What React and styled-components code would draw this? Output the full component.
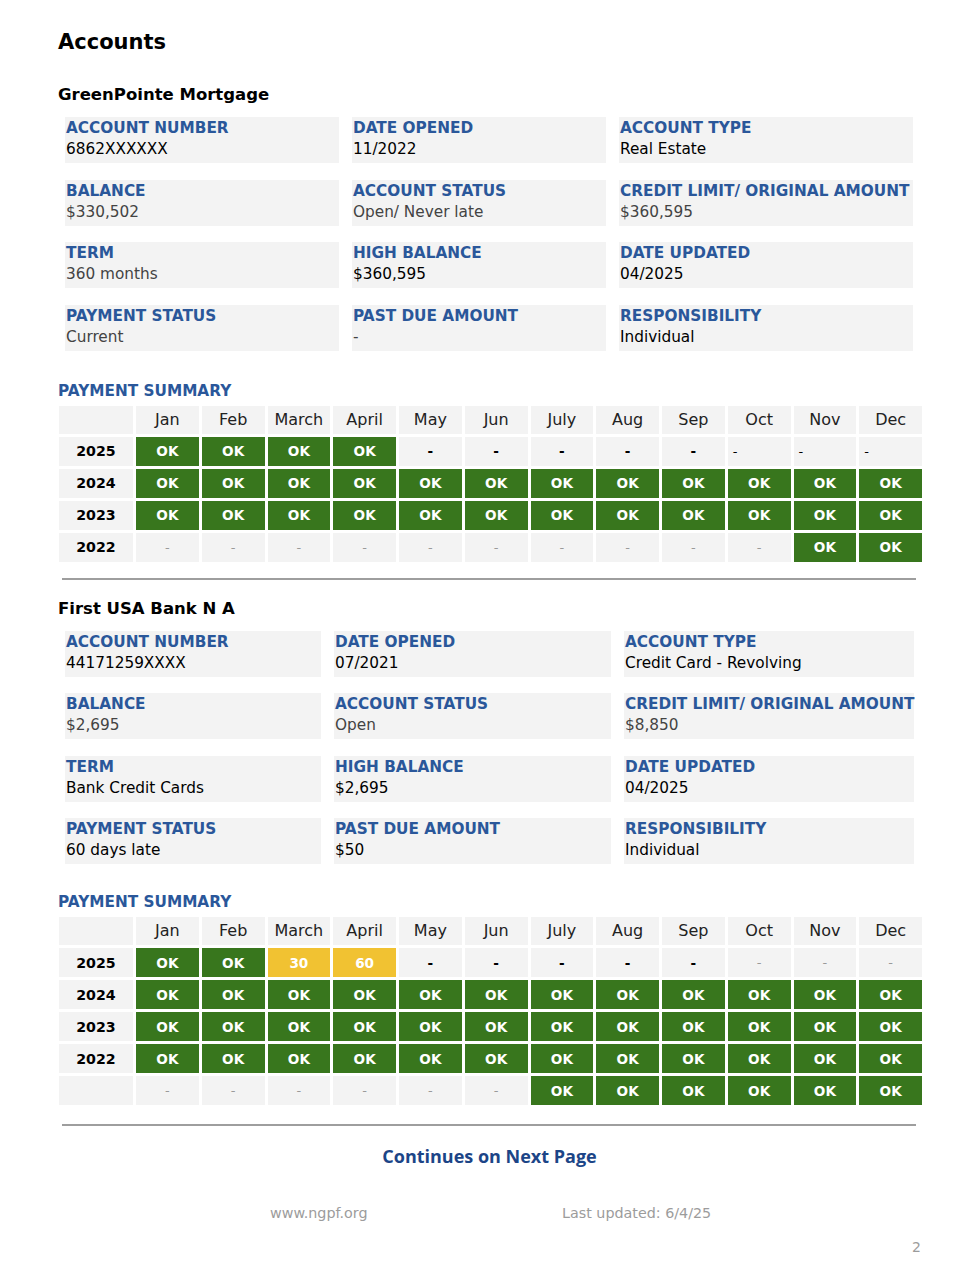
import React from "react";
import styled, { createGlobalStyle } from "styled-components";

const Global = createGlobalStyle`
  html, body { margin: 0; padding: 0; background: #fff; }
  body { font-family: "DejaVu Sans", "Liberation Sans", sans-serif; color: #000; }
`;

const Page = styled.div`
  width: 979px;
  min-height: 1266px;
  box-sizing: border-box;
  padding: 0 0 0 58px;
  display: flex;
  flex-direction: column;
`;

const Title = styled.h1`
  margin: 29px 0 0;
  font-size: 21px;
  line-height: 26px;
  font-weight: 700;
`;

const AccountName = styled.h2`
  margin: ${(p) => p.$top}px 0 0;
  font-size: 16.5px;
  line-height: 22px;
  font-weight: 700;
`;

const InfoGrid = styled.div`
  margin: 11px 0 0 7px;
  display: grid;
  grid-template-columns: ${(p) => p.$cols};
  column-gap: 13px;
  row-gap: 16.5px;
  width: 849px;
`;

const InfoCell = styled.div`
  background: #f3f3f3;
  height: 46px;
  box-sizing: border-box;
  padding: 1px 1px 0;
  display: flex;
  flex-direction: column;
`;

const Label = styled.div`
  color: #2a579a;
  font-weight: 700;
  font-size: 15.3px;
  line-height: 20px;
  white-space: nowrap;
`;

const Value = styled.div`
  color: ${(p) => (p.$muted ? "#434343" : "#000")};
  font-size: 15.3px;
  line-height: 22px;
  white-space: nowrap;
`;

const SectionLabel = styled.div`
  margin-top: ${(p) => p.$top}px;
  color: #2a579a;
  font-weight: 700;
  font-size: 15.3px;
  line-height: 20px;
`;

const Table = styled.table`
  margin: 2px 0 0 -2px;
  width: 869px;
  table-layout: fixed;
  border-collapse: separate;
  border-spacing: 3px;
`;

const HeadCell = styled.th`
  background: #f3f3f3;
  height: 28px;
  padding: 0;
  font-weight: 400;
  font-size: 16px;
  line-height: 18px;
  color: #222;
  text-align: center;
  vertical-align: middle;
  width: ${(p) => (p.$year ? "74px" : "auto")};
`;

const YearCell = styled.td`
  background: #f3f3f3;
  height: 29px;
  padding: 0;
  font-weight: 700;
  font-size: 14.2px;
  text-align: center;
  color: #000;
`;

const cellBg = { ok: "#38761d", late: "#f1c232" };

const MonthCell = styled.td`
  height: 29px;
  padding: ${(p) => (p.$kind === "dashLeft" ? "0 0 0 5px" : "0")};
  background: ${(p) => cellBg[p.$kind] || "#f3f3f3"};
  color: ${(p) =>
    p.$kind === "ok" || p.$kind === "late"
      ? "#fff"
      : p.$kind === "empty"
      ? "#9a9a9a"
      : "#000"};
  font-weight: ${(p) =>
    p.$kind === "ok" || p.$kind === "late" || p.$kind === "dash" ? 700 : 400};
  font-size: ${(p) => (p.$kind === "empty" || p.$kind === "dashLeft" ? "13px" : "13.6px")};
  text-align: ${(p) => (p.$kind === "dashLeft" ? "left" : "center")};
`;

const Rule = styled.hr`
  margin: ${(p) => p.$top}px 0 0 4px;
  width: 854px;
  height: 2px;
  border: 0;
  background: #9e9e9e;
`;

const Continue = styled.div`
  margin-top: 18px;
  width: 863px;
  text-align: center;
  font-family: "Open Sans", "Noto Sans", sans-serif;
  font-weight: 700;
  font-size: 18px;
  line-height: 24px;
  color: #1c4587;
`;

const Footer = styled.div`
  margin: 36px 0 0 212px;
  display: flex;
  font-size: 14.3px;
  line-height: 18px;
  color: #9c9c9c;
`;

const FooterItem = styled.span`
  width: ${(p) => p.$w || "auto"};
`;

const PageNum = styled.div`
  margin-top: 16px;
  padding-right: 58px;
  text-align: right;
  font-size: 14px;
  line-height: 18px;
  color: #9c9c9c;
`;

const MONTHS = ["Jan", "Feb", "March", "April", "May", "Jun", "July", "Aug", "Sep", "Oct", "Nov", "Dec"];

const rep = (v, n) => Array(n).fill(v);

const accounts = [
  {
    name: "GreenPointe Mortgage",
    top: 29,
    cols: "274px 254px 294px",
    summaryTop: 30,
    fields: [
      ["ACCOUNT NUMBER", "6862XXXXXX"],
      ["DATE OPENED", "11/2022"],
      ["ACCOUNT TYPE", "Real Estate"],
      ["BALANCE", "$330,502", true],
      ["ACCOUNT STATUS", "Open/ Never late", true],
      ["CREDIT LIMIT/ ORIGINAL AMOUNT", "$360,595", true],
      ["TERM", "360 months", true],
      ["HIGH BALANCE", "$360,595"],
      ["DATE UPDATED", "04/2025"],
      ["PAYMENT STATUS", "Current", true],
      ["PAST DUE AMOUNT", "-", true],
      ["RESPONSIBILITY", "Individual"],
    ],
    rows: [
      ["2025", [...rep(["ok", "OK"], 4), ...rep(["dash", "-"], 5), ...rep(["dashLeft", "-"], 3)]],
      ["2024", rep(["ok", "OK"], 12)],
      ["2023", rep(["ok", "OK"], 12)],
      ["2022", [...rep(["empty", "-"], 10), ...rep(["ok", "OK"], 2)]],
    ],
    ruleTop: 13,
  },
  {
    name: "First USA Bank N A",
    top: 18,
    cols: "256px 277px 290px",
    summaryTop: 28,
    fields: [
      ["ACCOUNT NUMBER", "44171259XXXX"],
      ["DATE OPENED", "07/2021"],
      ["ACCOUNT TYPE", "Credit Card - Revolving"],
      ["BALANCE", "$2,695", true],
      ["ACCOUNT STATUS", "Open", true],
      ["CREDIT LIMIT/ ORIGINAL AMOUNT", "$8,850", true],
      ["TERM", "Bank Credit Cards"],
      ["HIGH BALANCE", "$2,695"],
      ["DATE UPDATED", "04/2025"],
      ["PAYMENT STATUS", "60 days late"],
      ["PAST DUE AMOUNT", "$50"],
      ["RESPONSIBILITY", "Individual"],
    ],
    rows: [
      ["2025", [["ok", "OK"], ["ok", "OK"], ["late", "30"], ["late", "60"], ...rep(["dash", "-"], 5), ...rep(["empty", "-"], 3)]],
      ["2024", rep(["ok", "OK"], 12)],
      ["2023", rep(["ok", "OK"], 12)],
      ["2022", rep(["ok", "OK"], 12)],
      ["", [...rep(["empty", "-"], 6), ...rep(["ok", "OK"], 6)]],
    ],
    ruleTop: 16,
  },
];

function Account({ a }) {
  return (
    <>
      <AccountName $top={a.top}>{a.name}</AccountName>
      <InfoGrid $cols={a.cols}>
        {a.fields.map(([label, value, muted]) => (
          <InfoCell key={label}>
            <Label>{label}</Label>
            <Value $muted={muted}>{value}</Value>
          </InfoCell>
        ))}
      </InfoGrid>
      <SectionLabel $top={a.summaryTop}>PAYMENT SUMMARY</SectionLabel>
      <Table>
        <thead>
          <tr>
            <HeadCell $year />
            {MONTHS.map((m) => (
              <HeadCell key={m}>{m}</HeadCell>
            ))}
          </tr>
        </thead>
        <tbody>
          {a.rows.map(([year, cells], i) => (
            <tr key={i}>
              <YearCell>{year}</YearCell>
              {cells.map(([kind, text], j) => (
                <MonthCell key={j} $kind={kind}>
                  {text}
                </MonthCell>
              ))}
            </tr>
          ))}
        </tbody>
      </Table>
      <Rule $top={a.ruleTop} />
    </>
  );
}

export default function App() {
  return (
    <>
      <Global />
      <Page>
        <Title>Accounts</Title>
        {accounts.map((a) => (
          <Account key={a.name} a={a} />
        ))}
        <Continue>Continues on Next Page</Continue>
        <Footer>
          <FooterItem $w="292px">www.ngpf.org</FooterItem>
          <FooterItem>Last updated: 6/4/25</FooterItem>
        </Footer>
        <PageNum>2</PageNum>
      </Page>
    </>
  );
}
